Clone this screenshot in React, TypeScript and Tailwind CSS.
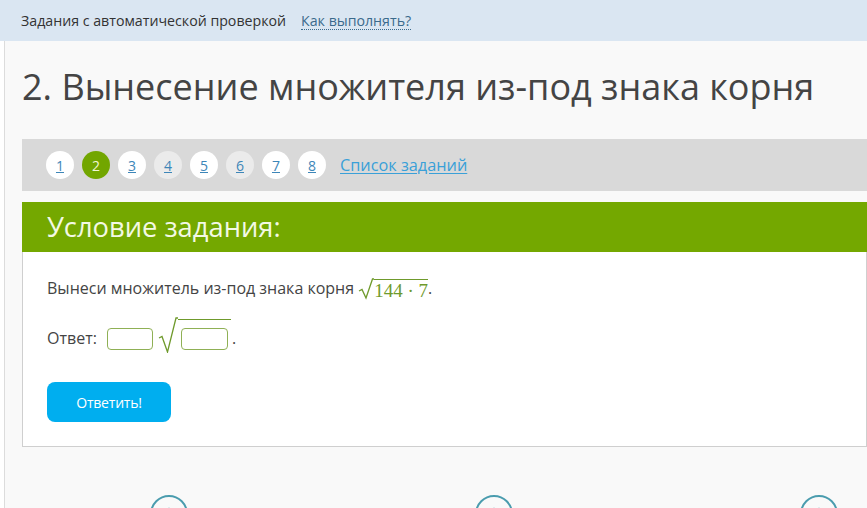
import { ArrowUp } from 'lucide-react';

const pages = [
  { n: 1, state: 'plain' },
  { n: 2, state: 'active' },
  { n: 3, state: 'plain' },
  { n: 4, state: 'done' },
  { n: 5, state: 'plain' },
  { n: 6, state: 'done' },
  { n: 7, state: 'plain' },
  { n: 8, state: 'plain' },
];

function Sqrt({ children }: { children: React.ReactNode }) {
  return (
    <span className="inline-flex items-end">
      <svg width="16" height="22" viewBox="0 0 16 22" className="shrink-0">
        <path d="M1 13 L4 11.5 L8 20 L14.5 1 L16 1" fill="none" stroke="#6f9a2c" strokeWidth="1.3" />
      </svg>
      <span className="border-t-[1.3px] border-[#6f9a2c] leading-none pt-[1px]">{children}</span>
    </span>
  );
}

export default function App() {
  return (
    <div className="w-[867px] h-[508px] overflow-hidden bg-[#f9f9f9] font-['Open_Sans',sans-serif] text-[#333]">
      {/* Top bar */}
      <div className="h-[41px] bg-[#dae6f2] flex items-center pl-[21px] gap-[15px] text-[14.2px]">
        <span className="text-[#333]">Задания с автоматической проверкой</span>
        <span className="text-[#3b6a8c] border-b border-dotted border-[#3b6a8c] leading-[17px]">Как выполнять?</span>
      </div>

      <div className="flex h-[467px]">
        <div className="w-[5px] bg-white border-r border-[#dcdcdc] shrink-0" />
        <div className="flex-1 pl-[17px]">
          <h1 className="text-[36px] leading-none text-[#444] pt-[28px] pb-[34px] whitespace-nowrap">
            2. Вынесение множителя из-под знака корня
          </h1>

          {/* Pager */}
          <div className="h-[52px] bg-[#d9d9d9] flex items-center pl-[24px] gap-[8px]">
            {pages.map(p => (
              <div
                key={p.n}
                className={
                  'w-[28px] h-[28px] rounded-full flex items-center justify-center text-[14px] ' +
                  (p.state === 'active'
                    ? 'bg-[#72a600] text-[#f2f7d5]'
                    : p.state === 'done'
                      ? 'bg-[#ebebeb] text-[#3d86b8] underline'
                      : 'bg-white text-[#3d86b8] underline')
                }
              >
                {p.n}
              </div>
            ))}
            <span className="ml-[6px] text-[16.3px] text-[#3aa0d8] underline underline-offset-2">Список заданий</span>
          </div>

          {/* Task card */}
          <div className="mt-[11px] bg-[#74a800] h-[50px] flex items-center pl-[25px]">
            <span className="text-[27.3px] text-[#f3f9e4]">Условие задания:</span>
          </div>
          <div className="bg-white border border-t-0 border-[#cfcfcf] h-[195px] pl-[24px] pt-[24px]">
            <p className="text-[16px] text-[#444] flex items-end">
              Вынеси множитель из-под знака корня&nbsp;
              <Sqrt>
                <span className="font-['Liberation_Serif',serif] text-[19px] text-[#6f9a2c]">144 · 7</span>
              </Sqrt>
              <span>.</span>
            </p>
            <div className="mt-[17px] flex items-end text-[16px] text-[#444]">
              <span className="mr-[10px] mb-[3px]">Ответ:</span>
              <div className="w-[46px] h-[22px] border border-[#8fb055] rounded-[4px] mb-[3px]" />
              <span className="inline-flex items-end ml-[5px]">
                <svg width="20" height="36" viewBox="0 0 20 36" className="shrink-0">
                  <path d="M1 21 L4 19.5 L9.5 35 L18 1 L20 1" fill="none" stroke="#6f9a2c" strokeWidth="1.3" />
                </svg>
                <span className="border-t-[1.3px] border-[#6f9a2c] pt-[8px] pl-[3px] pr-[3px] pb-[3px]">
                  <div className="w-[47px] h-[22px] border border-[#8fb055] rounded-[4px]" />
                </span>
              </span>
              <span className="ml-[1px] mb-[3px]">.</span>
            </div>
            <button className="mt-[29px] w-[124px] h-[40px] rounded-[8px] bg-[#00aeef] text-white text-[14px] tracking-[-0.2px]">
              Ответить!
            </button>
          </div>

          {/* Bottom icons */}
          <div className="flex pl-[128px] pt-[48px] gap-[287px]">
            {[0, 1, 2].map(i => (
              <div key={i} className="w-[38px] h-[38px] rounded-full border-[2px] border-[#4a9cae] flex items-center justify-center">
                <ArrowUp size={18} color="#4a9cae" strokeWidth={2.5} />
              </div>
            ))}
          </div>
        </div>
      </div>
    </div>
  );
}
